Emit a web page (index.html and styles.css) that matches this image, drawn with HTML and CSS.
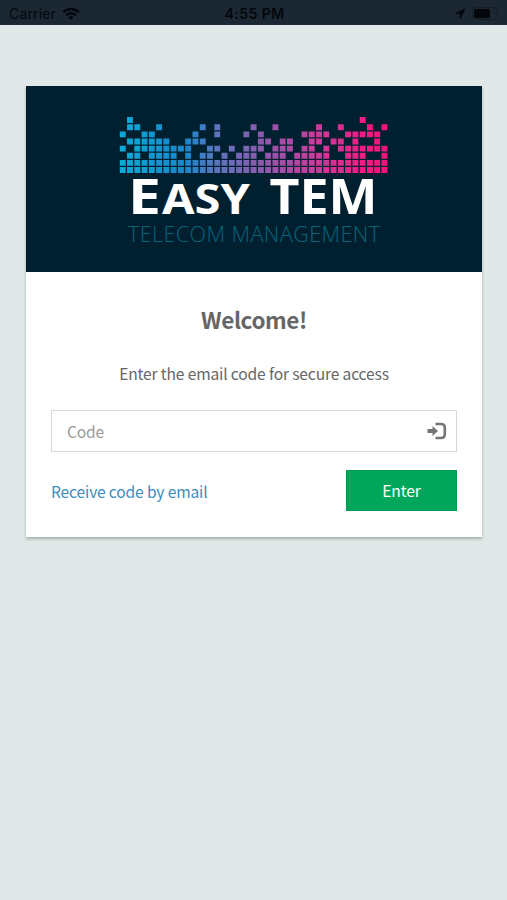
FILE: index.html
```
<!DOCTYPE html>
<html lang="en">
<head>
  <meta charset="UTF-8">
  <title>Easy TEM</title>
  <link rel="stylesheet" href="styles.css">
</head>
<body>
  <div class="status-bar">
    <div class="status-left">
      <span>Carrier</span>
      <svg width="18" height="13" viewBox="0 0 18 13" fill="none" stroke="#03070c" stroke-width="2.6">
        <path d="M1.2 5.2a11 11 0 0 1 15.6 0"/>
        <path d="M4.2 8.3a6.8 6.8 0 0 1 9.6 0"/>
        <path d="M9 13L6.4 10.4a3.7 3.7 0 0 1 5.2 0z" fill="#03070c" stroke="none"/>
      </svg>
    </div>
    <div class="status-time">4:55 PM</div>
    <div class="status-right">
      <svg width="12" height="12" viewBox="0 0 12 12"><path d="M11.8 .2L.2 6h5.6v5.8z" fill="#03070c"/></svg>
      <svg width="28" height="13" viewBox="0 0 28 13">
        <rect x=".5" y=".5" width="24" height="12" rx="3" fill="none" stroke="#121c26"/>
        <rect x="2" y="2" width="16" height="9" rx="1.5" fill="#03070c"/>
        <path d="M26 4.5q2 2 0 4z" fill="#121c26"/>
      </svg>
    </div>
  </div>

  <div class="card">
    <div class="logo">
      <svg width="456" height="186" viewBox="0 0 456 186">
        <defs>
          <linearGradient id="bars" gradientUnits="userSpaceOnUse" x1="93" y1="0" x2="363" y2="0">
            <stop offset="0" stop-color="#0eaad6"/>
            <stop offset=".24" stop-color="#1688cc"/>
            <stop offset=".36" stop-color="#5c75be"/>
            <stop offset=".52" stop-color="#8b5aad"/>
            <stop offset=".72" stop-color="#c43f9d"/>
            <stop offset=".9" stop-color="#ee1d85"/>
            <stop offset="1" stop-color="#fb117b"/>
          </linearGradient>
        </defs>
        <path id="equalizer" fill="url(#bars)"/>
        <text class="logo-name" x="102" y="128" font-size="48" textLength="33" lengthAdjust="spacingAndGlyphs">E</text>
        <text class="logo-name" x="136" y="128" font-size="41.5" textLength="88" lengthAdjust="spacingAndGlyphs">ASY</text>
        <text class="logo-name" x="243.5" y="128" font-size="48" textLength="108" lengthAdjust="spacingAndGlyphs">TEM</text>
        <text class="logo-sub" x="102" y="156" textLength="252">TELECOM MANAGEMENT</text>
      </svg>
    </div>

    <div class="content">
      <h1>Welcome!</h1>
      <p>Enter the email code for secure access</p>
      <div class="field">
        <input type="text" placeholder="Code">
        <svg width="20" height="18" viewBox="0 0 20 18">
          <path d="M8.5 2H14q3.8 0 3.8 3.8v6.4Q17.8 16 14 16H8.5" fill="none" stroke="#757575" stroke-width="2.6"/>
          <path d="M.5 6.9h5V4.1L11 9l-5.5 4.9v-2.8h-5z" fill="#757575"/>
        </svg>
      </div>
      <div class="actions">
        <a href="#">Receive code by email</a>
        <button>Enter</button>
      </div>
    </div>
  </div>

  <script>
    // equalizer squares of the logo
    const rows = [
      ".#...............................#...",
      ".##..#.....#.#....#..#.....#..#...#.#",
      "#..##.....#..#...#.#.....####..#####.",
      ".######..###.......##.##..##.##.#..#.",
      "#.########..##.#.###.###.##.#.#######",
      ".##.####.#.##.#.###.###.#####..###..#",
      "#####################################",
      "#####################################"
    ];
    let d = "";
    rows.forEach((row, r) => {
      [...row].forEach((cell, c) => {
        if (cell === "#") {
          d += `M${(93.8 + c * 7.27).toFixed(2)} ${(31.1 + r * 7.14).toFixed(2)}h5.9v5.9h-5.9z`;
        }
      });
    });
    document.getElementById("equalizer").setAttribute("d", d);
  </script>
</body>
</html>
```
FILE: styles.css
```
body {
  margin: 0;
  min-height: 900px;
  background-color: #e1e9e8;
  font-family: "Noto Sans CJK SC", "Open Sans", sans-serif;
  color: #666;
}
svg {
  display: block;
}
.status-bar {
  display: grid;
  grid-template-columns: 1fr auto 1fr;
  align-items: center;
  height: 25px;
  padding: 2px 7px 0 9px;
  box-sizing: border-box;
  background: #1b2733;
  color: #03070c;
  font-family: Inter, sans-serif;
  font-size: 14px;
}
.status-left, .status-right {
  display: flex;
  align-items: center;
  gap: 6px;
}
.status-left {
  letter-spacing: 0.15px;
}
.status-right {
  justify-content: flex-end;
}
.status-time {
  font-weight: 600;
  letter-spacing: 0.45px;
}
.card {
  width: 456px;
  height: 451px;
  margin: 61px 0 0 26px;
  background: white;
  box-shadow: 0 2px 3px rgba(0,0,0,0.25);
}
.logo {
  height: 186px;
  background: #00202f;
}
.logo-name {
  font-family: "Noto Sans", sans-serif;
  font-weight: bold;
  fill: #fff;
}
.logo-sub {
  font-family: "Open Sans", sans-serif;
  font-weight: 300;
  font-size: 21.5px;
  fill: #07647b;
}
.content {
  padding: 30px 25px 26px;
}
h1 {
  margin: 0;
  font-size: 22.5px;
  line-height: 34px;
  letter-spacing: -0.4px;
  text-align: center;
}
p {
  margin: 24px 0;
  font-size: 15.6px;
  line-height: 26px;
  letter-spacing: -0.15px;
  text-align: center;
}
.field {
  display: flex;
  align-items: center;
  box-sizing: border-box;
  height: 42px;
  padding: 0 9px 0 15px;
  border: 1px solid #d5d8d8;
}
input {
  flex: 1;
  padding: 0 0 1px;
  border: 0;
  outline: 0;
  background: none;
  font-family: inherit;
  font-size: 15.6px;
  letter-spacing: -0.15px;
}
input::placeholder {
  color: #999;
}
.actions {
  display: flex;
  align-items: center;
  justify-content: space-between;
  margin-top: 18px;
}
a {
  color: #3c8dbc;
  font-size: 15.6px;
  letter-spacing: -0.15px;
  text-decoration: none;
}
button {
  width: 111px;
  height: 41px;
  padding: 0 0 1px;
  border: 1px solid #009a50;
  background: #00a65a;
  color: #fff;
  font-family: inherit;
  font-size: 15.6px;
  letter-spacing: -0.1px;
}
```
